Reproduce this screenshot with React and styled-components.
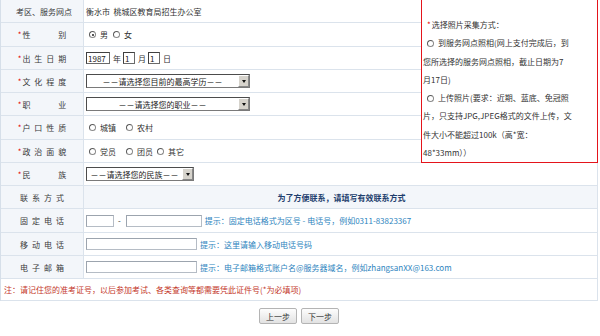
import React from 'react';
import styled, { createGlobalStyle } from 'styled-components';

const Global = createGlobalStyle`
  *, *::before, *::after { box-sizing: border-box; }
  html, body { margin: 0; padding: 0; background: #fff; }
  body {
    font-family: "Noto Sans CJK SC", "Liberation Sans", sans-serif;
    font-size: 8px;
    color: #333;
  }
`;

const Page = styled.div`
  width: 600px;
  height: 336px;
  overflow: hidden;
`;

const Form = styled.div`
  display: grid;
  width: 598px;
  border-left: 1px solid #d6dfe9;
  grid-template-columns: 83px 337px 177px;
  grid-template-rows: 23px 24px 23px 23px 23px 24px 23px 23px 23px 24px 23px 23px 22px;
`;

const LabelCell = styled.div`
  display: flex;
  align-items: center;
  justify-content: center;
  padding-left: 4px;
  background: #f3f6fa;
  border-right: 1px solid #dbe3ec;
  border-bottom: 1px solid #dbe3ec;
  color: #3a3a3a;
  white-space: nowrap;
`;

const Req = styled.span`
  color: #e60000;
  margin-right: 1px;
`;

const LabelText = styled.span`
  letter-spacing: ${p => (p.$spaced ? '4px' : '0')};
`;

const ValueCell = styled.div`
  display: flex;
  align-items: center;
  padding-left: 2px;
  white-space: nowrap;
  grid-column: ${p => (p.$span ? 'span 2' : 'auto')};
  justify-content: ${p => (p.$center ? 'center' : 'flex-start')};
  background: ${p => (p.$tint ? '#f3f6fa' : '#fff')};
  border-bottom: 1px solid #dbe3ec;
  border-right: ${p => (p.$span ? '1px solid #dbe3ec' : 'none')};
`;

const PhotoCell = styled.div`
  grid-row: span 7;
  border: 1px solid #e4141b;
  border-top: none;
  padding: 16px 2px 0 1px;
  line-height: 18.3px;
  white-space: nowrap;
  color: #333;
`;

const PhotoLine = styled.div`
  display: flex;
  align-items: center;
  height: 18.3px;
  padding-left: ${p => (p.$indent ? '4px' : '0')};
`;

const NoteCell = styled.div`
  grid-column: 1 / -1;
  display: flex;
  align-items: center;
  padding-left: 3px;
  color: #c4372a;
  border-right: 1px solid #dbe3ec;
  border-bottom: 1px solid #dbe3ec;
  white-space: nowrap;
`;

const Choice = styled.span`
  display: inline-flex;
  align-items: center;
  margin-left: ${p => p.$ml || 0}px;
`;

const Radio = styled.span`
  display: inline-block;
  position: relative;
  width: 7px;
  height: 7px;
  border-radius: 50%;
  border: 1px solid #8a8a8a;
  border-top-color: #5a5a5a;
  border-left-color: #5a5a5a;
  background: #fff;
  margin-right: 4px;
  &::after {
    content: '';
    display: ${p => (p.$checked ? 'block' : 'none')};
    position: absolute;
    left: 1.5px;
    top: 1.5px;
    width: 2px;
    height: 2px;
    border-radius: 50%;
    background: #222;
  }
`;

const TextBox = styled.input`
  width: ${p => p.$w}px;
  height: ${p => p.$h || 12}px;
  padding: 0 1px;
  margin: 0;
  font-family: inherit;
  font-size: 8px;
  color: #222;
  background: #fff;
  outline: none;
  border: 1px solid ${p => (p.$dark ? '#6a6a6a' : '#b5bcc5')};
  border-top-color: ${p => (p.$dark ? '#404040' : '#9ca4ae')};
  border-left-color: ${p => (p.$dark ? '#404040' : '#9ca4ae')};
`;

const Unit = styled.span`
  margin: 0 ${p => p.$mr || 2}px 0 ${p => p.$ml || 3}px;
`;

const Dash = styled.span`
  margin: 0 5px 0 4px;
`;

const SelectBox = styled.div`
  display: flex;
  align-items: stretch;
  width: ${p => p.$w}px;
  height: 14px;
  border: 1px solid #4c4c4c;
  border-right-color: #7a7a7a;
  border-bottom-color: #7a7a7a;
  background: #fff;
`;

const SelectText = styled.span`
  flex: 1;
  display: flex;
  align-items: center;
  justify-content: center;
  color: #222;
`;

const SelectArrow = styled.span`
  width: 11px;
  display: flex;
  align-items: center;
  justify-content: center;
  background: #d6d3cc;
  border: 1px solid #fff;
  border-right-color: #888;
  border-bottom-color: #888;
  &::after {
    content: '';
    border-left: 2.5px solid transparent;
    border-right: 2.5px solid transparent;
    border-top: 3px solid #111;
  }
`;

const Hint = styled.span`
  color: #2d84be;
  margin-left: ${p => p.$ml || 3}px;
`;

const Notice = styled.span`
  color: #1f3f6e;
  font-weight: bold;
`;

const ButtonBar = styled.div`
  display: flex;
  justify-content: center;
  gap: 4px;
  width: 598px;
  margin-top: 7px;
`;

const StepButton = styled.button`
  width: 38px;
  height: 16px;
  padding: 0;
  font-family: inherit;
  font-size: 8px;
  color: #333;
  border: 1px solid #b4b4b4;
  border-radius: 2px;
  background: linear-gradient(#fdfdfd, #e2e2e2);
`;

function Label({ req, spaced, children }) {
  return (
    <LabelCell>
      {req && <Req>*</Req>}
      <LabelText $spaced={spaced}>{children}</LabelText>
    </LabelCell>
  );
}

function Select({ w, children }) {
  return (
    <SelectBox $w={w}>
      <SelectText>{children}</SelectText>
      <SelectArrow />
    </SelectBox>
  );
}

export default function App() {
  return (
    <Page>
      <Global />
      <Form>
        <Label>考区、服务网点</Label>
        <ValueCell>衡水市&nbsp;&nbsp;桃城区教育局招生办公室</ValueCell>
        <PhotoCell>
          <PhotoLine $indent><Req>*</Req>选择照片采集方式：</PhotoLine>
          <PhotoLine $indent><Radio />到服务网点照相(网上支付完成后，到</PhotoLine>
          <PhotoLine>您所选择的服务网点照相，截止日期为7</PhotoLine>
          <PhotoLine>月17日)</PhotoLine>
          <PhotoLine $indent><Radio />上传照片(要求：近期、蓝底、免冠照</PhotoLine>
          <PhotoLine>片，只支持JPG,JPEG格式的文件上传，文</PhotoLine>
          <PhotoLine>件大小不能超过100k（高*宽：</PhotoLine>
          <PhotoLine>48*33mm））</PhotoLine>
        </PhotoCell>

        <Label req spaced>性　　别</Label>
        <ValueCell>
          <Choice $ml={3}><Radio $checked />男</Choice>
          <Choice $ml={5}><Radio />女</Choice>
        </ValueCell>

        <Label req spaced>出生日期</Label>
        <ValueCell>
          <TextBox $w={24} $dark defaultValue="1987" readOnly />
          <Unit>年</Unit>
          <TextBox $w={12} $dark defaultValue="1" readOnly />
          <Unit>月</Unit>
          <TextBox $w={12} $dark defaultValue="1" readOnly />
          <Unit>日</Unit>
        </ValueCell>

        <Label req spaced>文化程度</Label>
        <ValueCell>
          <Select w={164}>－－请选择您目前的最高学历－－</Select>
        </ValueCell>

        <Label req spaced>职　　业</Label>
        <ValueCell>
          <Select w={164}>－－请选择您的职业－－</Select>
        </ValueCell>

        <Label req spaced>户口性质</Label>
        <ValueCell>
          <Choice $ml={3}><Radio />城镇</Choice>
          <Choice $ml={10}><Radio />农村</Choice>
        </ValueCell>

        <Label req spaced>政治面貌</Label>
        <ValueCell>
          <Choice $ml={3}><Radio />党员</Choice>
          <Choice $ml={10}><Radio />团员</Choice>
          <Choice $ml={4}><Radio />其它</Choice>
        </ValueCell>

        <Label req spaced>民　　族</Label>
        <ValueCell $span>
          <Select w={108}>－－请选择您的民族－－</Select>
        </ValueCell>

        <Label spaced>联系方式</Label>
        <ValueCell $span $tint $center>
          <Notice>为了方便联系，请填写有效联系方式</Notice>
        </ValueCell>

        <Label spaced>固定电话</Label>
        <ValueCell $span>
          <TextBox $w={28} />
          <Dash>-</Dash>
          <TextBox $w={76} />
          <Hint>提示：固定电话格式为区号 - 电话号，例如0311-83823367</Hint>
        </ValueCell>

        <Label spaced>移动电话</Label>
        <ValueCell $span>
          <TextBox $w={111} />
          <Hint>提示：这里请输入移动电话号码</Hint>
        </ValueCell>

        <Label spaced>电子邮箱</Label>
        <ValueCell $span>
          <TextBox $w={111} />
          <Hint>提示：电子邮箱格式账户名@服务器域名，例如zhangsanXX@163.com</Hint>
        </ValueCell>

        <NoteCell>注：请记住您的准考证号，以后参加考试、各类查询等都需要凭此证件号(*为必填项)</NoteCell>
      </Form>
      <ButtonBar>
        <StepButton>上一步</StepButton>
        <StepButton>下一步</StepButton>
      </ButtonBar>
    </Page>
  );
}
